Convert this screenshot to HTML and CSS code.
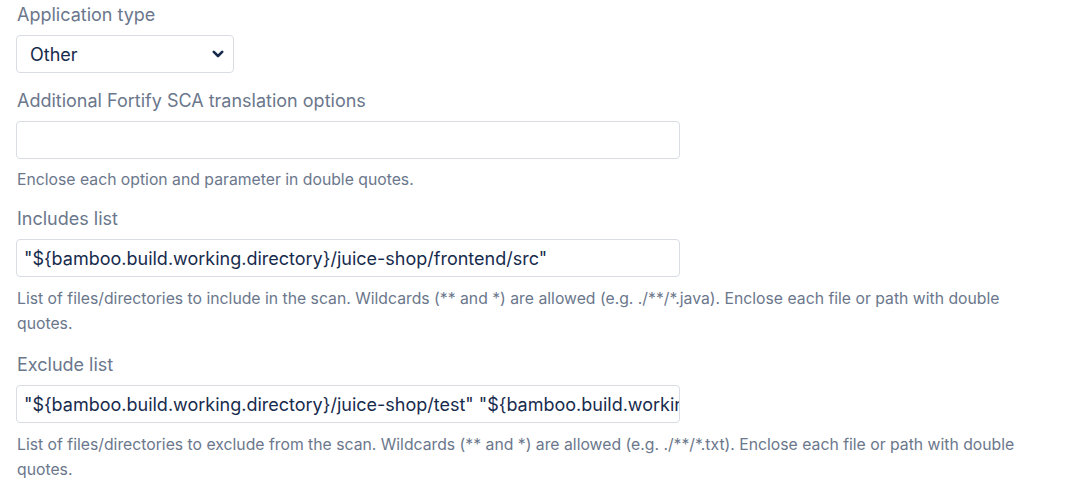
FILE: index.html
```html
<!DOCTYPE html>
<html>
<head>
<meta charset="utf-8">
<link rel="stylesheet" href="styles.css">
</head>
<body>
<form class="form">
  <div class="field field--select">
    <label class="label">Application type</label>
    <div class="select">
      <span class="select-value">Other</span>
      <svg class="chevron" width="12" height="8" viewBox="0 0 12 8"><path d="M1.8 1.8 L6 6 L10.2 1.8" fill="none" stroke="#172b4d" stroke-width="2.6" stroke-linecap="round" stroke-linejoin="round"/></svg>
    </div>
  </div>
  <div class="field">
    <label class="label">Additional Fortify SCA translation options</label>
    <div class="input"></div>
    <p class="help">Enclose each option and parameter in double quotes.</p>
  </div>
  <div class="field field--long">
    <label class="label">Includes list</label>
    <div class="input">"${bamboo.build.working.directory}/juice-shop/frontend/src"</div>
    <p class="help help--long">List of files/directories to include in the scan. Wildcards (** and *) are allowed (e.g. ./**/*.java). Enclose each file or path with double quotes.</p>
  </div>
  <div class="field field--long">
    <label class="label">Exclude list</label>
    <div class="input">"${bamboo.build.working.directory}/juice-shop/test" "${bamboo.build.working.directory}/juice-shop/node_modules"</div>
    <p class="help help--long">List of files/directories to exclude from the scan. Wildcards (** and *) are allowed (e.g. ./**/*.txt). Enclose each file or path with double quotes.</p>
  </div>
</form>
</body>
</html>
```
FILE: styles.css
```css
html, body {
  margin: 0;
  padding: 0;
  background: #ffffff;
}
body {
  font-family: Inter, "Noto Sans", "Liberation Sans", sans-serif;
  color: #172b4d;
}
.form {
  padding: 5px 16px 0 16px;
  width: 1010px;
}
.field {
  margin-bottom: 17px;
}
.field--select {
  margin-bottom: 18px;
}
.field--long {
  margin-bottom: 19px;
}
.label {
  display: block;
  font-size: 18px;
  line-height: 20px;
  color: #6b778c;
  padding-left: 1px;
  margin-bottom: 10px;
}
.select {
  width: 218px;
  height: 38px;
  box-sizing: border-box;
  border: 1px solid #d9dde3;
  border-radius: 4px;
  display: flex;
  align-items: center;
  justify-content: space-between;
  padding: 0 9px 0 13px;
  font-size: 18px;
}
.input {
  width: 664px;
  height: 38px;
  box-sizing: border-box;
  border: 1px solid #d9dde3;
  border-radius: 4px;
  display: flex;
  align-items: center;
  padding: 0 7px;
  font-size: 18px;
  white-space: nowrap;
  overflow: hidden;
  color: #172b4d;
}
.help {
  margin: 8px 0 0 0;
  font-size: 15.75px;
  line-height: 25px;
  color: #6b778c;
  padding-left: 1px;
}
.help--long {
  margin-top: 9px;
}
```
